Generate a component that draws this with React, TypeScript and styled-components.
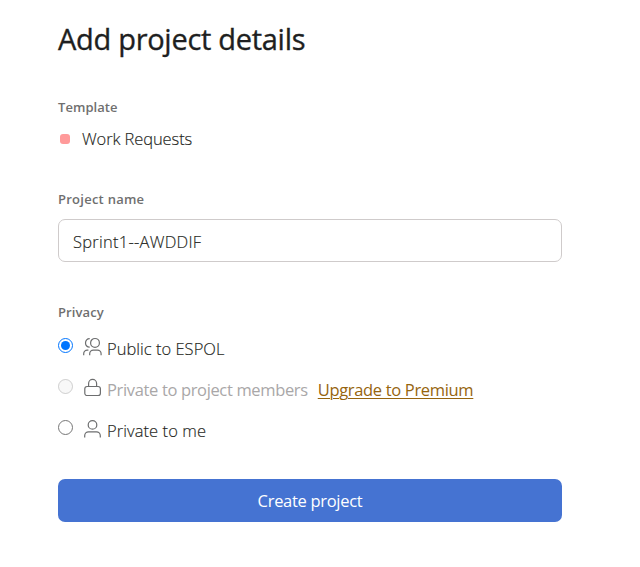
import React, { useState } from "react";
import styled, { createGlobalStyle } from "styled-components";

const GlobalStyle = createGlobalStyle`
  *, *::before, *::after { box-sizing: border-box; }
  body { margin: 0; background: #fff; }
`;

const Page = styled.main`
  width: 640px;
  height: 567px;
  padding: 18px 78px 0 58px;
  background: #fff;
  color: #1e1f21;
  font-family: "Open Sans", "Noto Sans", sans-serif;
  font-size: 16.5px;
  font-weight: 300;
  white-space: nowrap;
`;

const Form = styled.form`
  display: flex;
  flex-direction: column;
`;

const Title = styled.h1`
  height: 26px;
  margin: 0 0 54px;
  font-size: 29px;
  font-weight: 500;
  line-height: 42px;
  letter-spacing: -0.29px;
  -webkit-text-stroke: 0.35px currentColor;
`;

const Label = styled.div<{ $spacing: number }>`
  height: 18px;
  color: #6f6f6f;
  font-size: 13px;
  font-weight: 600;
  line-height: 18px;
  letter-spacing: ${(p) => p.$spacing}px;
`;

const Text = styled.span<{ $spacing: number; $muted?: boolean }>`
  line-height: 24px;
  letter-spacing: ${(p) => p.$spacing}px;
  color: ${(p) => (p.$muted ? "#a9a7a8" : "inherit")};
  font-weight: ${(p) => (p.$muted ? 400 : 300)};
  -webkit-text-stroke: ${(p) => (p.$muted ? "0" : "0.15px currentColor")};
`;

const Template = styled.div`
  display: flex;
  align-items: center;
  gap: 12px;
  height: 24px;
  margin: 11px 0 39px;
  padding-left: 2px;
`;

const Swatch = styled.span`
  width: 10px;
  height: 10px;
  border-radius: 3px;
  background: #ff9a9a;
`;

const NameInput = styled.input`
  width: 504px;
  height: 43px;
  margin: 11px 0 41px;
  padding: 1px 14px 0;
  border: 1px solid #cfcbcb;
  border-radius: 7px;
  outline: none;
  color: inherit;
  background: #fff;
  font: inherit;
  letter-spacing: 0.25px;
  -webkit-text-stroke: 0.15px currentColor;
`;

const Options = styled.div`
  display: flex;
  flex-direction: column;
  gap: 17px;
  margin: 16px 0 36px;
`;

const Option = styled.div`
  display: flex;
  height: 24px;
`;

const Radio = styled.input`
  width: 15px;
  height: 15px;
  margin: 1px 10px 0 0;
`;

const Icon = styled.svg`
  width: 20px;
  height: 20px;
  margin-right: 4px;
  fill: none;
  stroke: #6d6e6f;
  stroke-width: 1.2;
`;

const Upgrade = styled.a`
  margin-left: 10px;
  color: #96640e;
  font-weight: 400;
  line-height: 24px;
  letter-spacing: -0.33px;
  text-decoration: underline;
  text-decoration-thickness: 1px;
  text-underline-offset: 2px;
  cursor: pointer;
`;

const Submit = styled.button`
  width: 504px;
  height: 43px;
  padding: 0 0 1px;
  border: 0;
  border-radius: 7px;
  color: #fff;
  background: #4573d2;
  font: inherit;
  font-weight: 400;
  letter-spacing: -0.3px;
`;

const PeopleIcon = () => (
  <Icon viewBox="0 0 20 20">
    <circle cx="12" cy="5.9" r="4.4" />
    <path d="M6.7 1.6C4.2 1.5 2.5 3.5 2.5 5.9s1.7 4.4 4.2 4.3M6.7 18.2v-1.5a3.6 3.6 0 0 1 3.6-3.6h4.2a3.6 3.6 0 0 1 3.6 3.6v1.5M.7 18.2v-1.5a3.6 3.6 0 0 1 3.6-3.6h1.1" />
  </Icon>
);

const LockIcon = () => (
  <Icon viewBox="0 0 20 20">
    <rect x="1.8" y="8.5" width="15.6" height="9" rx="2.3" />
    <path d="M5.6 8.5V5.4a4 4 0 0 1 8 0v3.1" />
  </Icon>
);

const PersonIcon = () => (
  <Icon viewBox="0 0 20 20">
    <circle cx="9.5" cy="5.9" r="4.3" />
    <path d="M1.7 18.6v-1.9a3.8 3.8 0 0 1 3.8-3.8h8a3.8 3.8 0 0 1 3.8 3.8v1.9" />
  </Icon>
);

export default function App() {
  const [name, setName] = useState("Sprint1--AWDDIF");
  const [privacy, setPrivacy] = useState("public");
  return (
    <Page>
      <GlobalStyle />
      <Form onSubmit={(e) => e.preventDefault()}>
        <Title>Add project details</Title>
        <Label $spacing={0.05}>Template</Label>
        <Template>
          <Swatch />
          <Text $spacing={-0.1}>Work Requests</Text>
        </Template>
        <Label as="label" htmlFor="name" $spacing={0.25}>Project name</Label>
        <NameInput id="name" spellCheck={false} value={name} onChange={(e) => setName(e.target.value)} />
        <Label $spacing={0.1}>Privacy</Label>
        <Options>
          <Option>
            <Radio type="radio" name="privacy" checked={privacy === "public"} onChange={() => setPrivacy("public")} />
            <PeopleIcon />
            <Text $spacing={0.02}>Public to ESPOL</Text>
          </Option>
          <Option>
            <Radio type="radio" name="privacy" disabled />
            <LockIcon />
            <Text $spacing={-0.35} $muted>Private to project members</Text>
            <Upgrade>Upgrade to Premium</Upgrade>
          </Option>
          <Option>
            <Radio type="radio" name="privacy" checked={privacy === "me"} onChange={() => setPrivacy("me")} />
            <PersonIcon />
            <Text $spacing={0.07}>Private to me</Text>
          </Option>
        </Options>
        <Submit>Create project</Submit>
      </Form>
    </Page>
  );
}
